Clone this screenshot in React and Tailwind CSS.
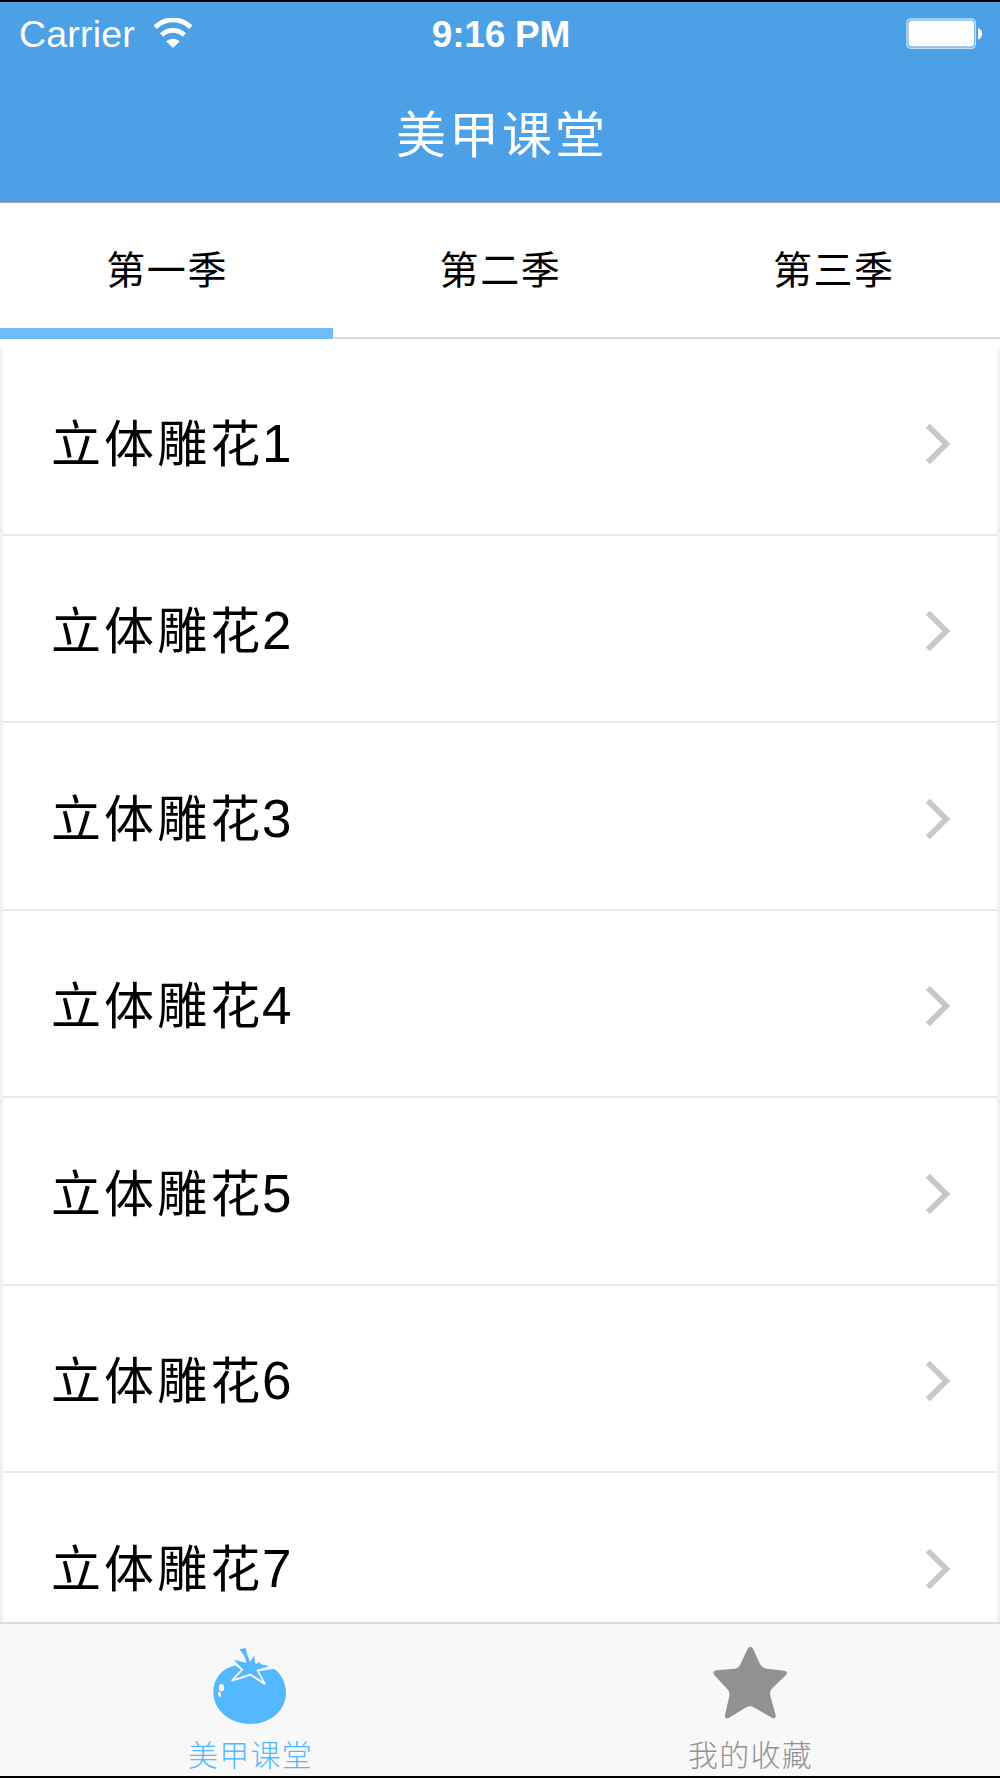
const lessons = [1, 2, 3, 4, 5, 6, 7];
const seasons = ["第一季", "第二季", "第三季"];

function WifiIcon() {
  return (
    <svg className="ml-[18px] mt-[16px] h-[31px] w-[40px]" viewBox="0 0 40 31" fill="none">
      <path d="M2.200 9.300C12.200 -.6 27.800 -.6 37.800 9.300" stroke="white" strokeWidth="4.800" />
      <path d="M8.600 17C15.200 10.800 24.800 10.800 31.400 17" stroke="white" strokeWidth="4.800" />
      <path d="M13.300 23.400C17 19.800 23 19.800 26.700 23.400L20 30Z" fill="white" />
    </svg>
  );
}

function BatteryIcon() {
  return (
    <svg className="h-[32px] w-[78px]" viewBox="0 0 78 32">
      <rect x=".9" y=".9" width="68.400" height="29.400" rx="4" fill="none" stroke="white" strokeOpacity=".65" strokeWidth="1.500" />
      <rect x="2.500" y="2.500" width="65.500" height="26" rx="3" fill="white" />
      <path d="M72 10C77.500 12 77.500 19.500 72 21.500Z" fill="white" />
    </svg>
  );
}

function TomatoIcon() {
  return (
    <svg className="h-[80px] w-[80px]" viewBox="0 0 240 240">
      <path d="M79 55C33 64 10 96 10 136C10 190 60 231 120 231C182 231 228 188 228 137C228 108 211 76 192 66C185 63 175 63 165 65L137 72L165 114L121 86L64 104L94 68Z" fill="#54b8fe" />
      <path d="M88 7L107 3L111 20L120 45L133 25L135 49L179 57L139 69L165 112L121 83L66 102L98 68L72 38L109 48C108 33 99 20 88 7Z" fill="#54b8fe" />
      <path d="M79 54L97 68L65 101L121 82L165 111L143 71L192 63" fill="none" stroke="#f8f8f8" strokeWidth="5" />
      <circle cx="147" cy="51" r="5" fill="#54b8fe" />
      <ellipse cx="34.500" cy="122" rx="8" ry="11" fill="#f8f8f8" />
      <ellipse cx="28.500" cy="142" rx="4.500" ry="8" transform="rotate(-15 28.500 142)" fill="#f8f8f8" />
    </svg>
  );
}

function StarIcon() {
  return (
    <svg className="h-[80px] w-[80px]" viewBox="0 0 240 240">
      <path d="M113 14Q121 2 129 14L149 58Q155 73 171 74L222 80Q236 83 228 93L188 131Q177 141 181 156L197 213Q199 226 187 222L131 190Q120 183 109 190L56 222Q43 227 45 213L58 156Q61 143 51 134L13 93Q5 82 19 79L74 74Q86 73 91 61Z" fill="#929292" />
    </svg>
  );
}

function Chevron() {
  return (
    <svg className="mr-[46px] mt-[6px] h-[42px] w-[26px]" viewBox="0 0 26 42" fill="none">
      <path d="M2.800 2.800L21.300 21L2.800 39.200" stroke="#c7c7cc" strokeWidth="5.600" />
    </svg>
  );
}

export default function App() {
  return (
    <div className="flex h-[1778px] w-[1000px] flex-col overflow-hidden border-y-2 border-black bg-white font-['Liberation_Sans','Noto_Sans_CJK_SC',sans-serif] text-black">
      <header className="h-[201px] shrink-0 border-b border-[#a9a9a9] bg-[#4ca0e5] text-white">
        <div className="grid h-[64px] grid-cols-3">
          <div className="flex pl-[19px]">
            <span className="pt-[11px] text-[37.500px] leading-[43px] tracking-[0.200px]">Carrier</span>
            <WifiIcon />
          </div>
          <div className="pl-[2px] pt-[11px] text-center text-[37px] font-bold leading-[43px] tracking-[-0.200px]">9:16 PM</div>
          <div className="flex justify-end pr-[16px] pt-[16px]">
            <BatteryIcon />
          </div>
        </div>
        <h1 className="pl-[4px] pt-[30px] text-center font-['Noto_Sans_CJK_SC',sans-serif] text-[50px] font-normal leading-[70px] tracking-[3px]">美甲课堂</h1>
      </header>
      <nav className="grid h-[136px] shrink-0 grid-cols-3">
        {seasons.map((season, i) => (
          <button
            key={season}
            className={
              i === 0
                ? "border-b-[11px] border-[#6ebcfa] pl-px pt-[12px] text-[39px] tracking-[1.600px]"
                : "border-b-2 border-[#d9d9d9] pl-px pt-[3px] text-[39px] tracking-[1.600px]"
            }
          >
            {season}
          </button>
        ))}
      </nav>
      <main className="mt-[10px] min-h-0 flex-1 overflow-hidden border-x-[3px] border-[#f1f1f1]">
        <div className="-mt-px">
          {lessons.map((n) => (
            <div key={n} className="flex h-[187.500px] items-center justify-between border-b-2 border-[#e9e9e9] pl-[48px]">
              <span className="pt-[7px] text-[53px] leading-[60px]">
                <span className="mr-[-1.500px] text-[50px] tracking-[3.100px]">立体雕花</span>
                {n}
              </span>
              <Chevron />
            </div>
          ))}
        </div>
      </main>
      <footer className="grid h-[154px] shrink-0 grid-cols-2 border-t-2 border-[#dadada] bg-[#f8f8f8] text-[30px] font-light leading-[36px] tracking-[1.200px]">
        <div className="flex flex-col items-center pt-[23px] text-[#54b8fe]">
          <TomatoIcon />
          <span className="mt-[11px] pl-px">美甲课堂</span>
        </div>
        <div className="flex flex-col items-center pt-[20px] text-[#929292]">
          <StarIcon />
          <span className="mt-[14px] pl-px">我的收藏</span>
        </div>
      </footer>
    </div>
  );
}
